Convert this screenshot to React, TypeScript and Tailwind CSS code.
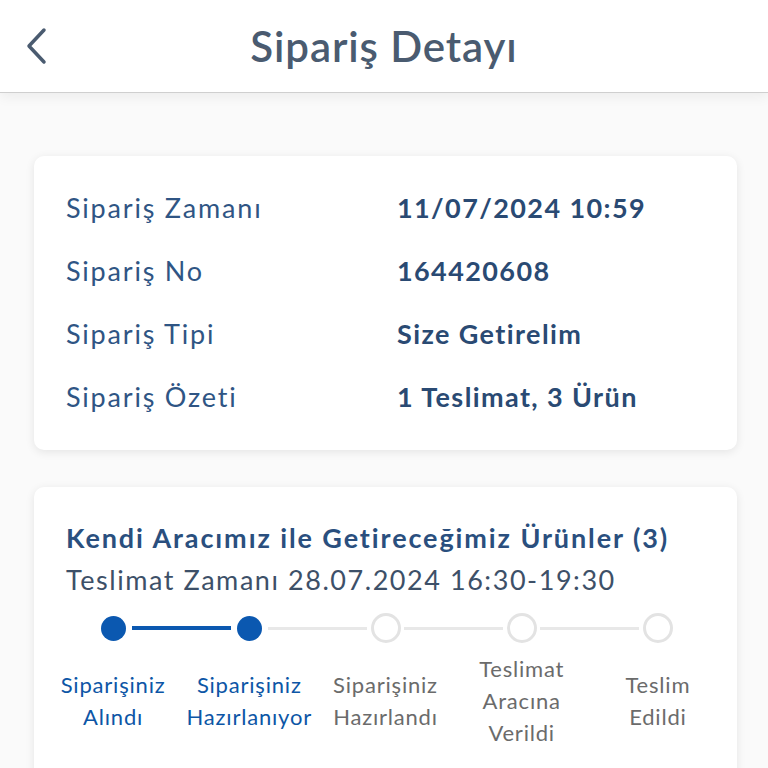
import React from "react";

const rows = [
    { label: "Sipariş Zamanı", value: "11/07/2024 10:59" },
    { label: "Sipariş No", value: "164420608" },
    { label: "Sipariş Tipi", value: "Size Getirelim" },
    { label: "Sipariş Özeti", value: "1 Teslimat, 3 Ürün" },
];

const steps = [
    { lines: ["Siparişiniz", "Alındı"], done: true },
    { lines: ["Siparişiniz", "Hazırlanıyor"], done: true },
    { lines: ["Siparişiniz", "Hazırlandı"], done: false },
    { lines: ["Teslimat", "Aracına", "Verildi"], done: false },
    { lines: ["Teslim", "Edildi"], done: false },
];

function Stepper() {
    return (
        <div className="grid grid-cols-5 px-[11px]">
            {steps.map((step, i) => {
                const prev = steps[i - 1];
                const leftBlue = prev && prev.done && step.done;
                const next = steps[i + 1];
                const rightBlue = next && next.done && step.done;
                return (
                    <div key={i} className="flex flex-col items-center">
                        <div className="flex w-full items-center h-[30px]">
                            <div
                                className={
                                    i === 0
                                        ? "flex-1"
                                        : leftBlue
                                        ? "flex-1 h-[4px] bg-[#0b58b0]"
                                        : "flex-1 h-[3px] bg-[#e8e8e8]"
                                }
                            />
                            <div className="w-[6px]" />
                            {step.done ? (
                                <div className="w-[25px] h-[25px] rounded-full bg-[#0b58b0]" />
                            ) : (
                                <div className="w-[30px] h-[30px] -mx-[2.5px] rounded-full border-[3px] border-[#e3e3e3] bg-white" />
                            )}
                            <div className="w-[6px]" />
                            <div
                                className={
                                    i === steps.length - 1
                                        ? "flex-1"
                                        : rightBlue
                                        ? "flex-1 h-[4px] bg-[#0b58b0]"
                                        : "flex-1 h-[3px] bg-[#e8e8e8]"
                                }
                            />
                        </div>
                        <div
                            className={
                                "mt-[10px] h-[96px] flex flex-col justify-center text-center text-[22px] leading-[32px] tracking-[0.8px] " +
                                (step.done ? "text-[#0d56a6]" : "text-[#6b6b6b]")
                            }
                        >
                            {step.lines.map((l) => (
                                <span key={l} className="whitespace-nowrap">
                                    {l}
                                </span>
                            ))}
                        </div>
                    </div>
                );
            })}
        </div>
    );
}

export default function App() {
    return (
        <div
            className="w-[768px] h-[768px] overflow-hidden bg-[#fafafa]"
            style={{ fontFamily: "Lato, 'Noto Sans', sans-serif" }}
        >
            {/* Header */}
            <div className="relative h-[93px] bg-white border-b border-[#cfcfcf] shadow-[0_4px_12px_rgba(0,0,0,0.06)] flex items-center justify-center">
                <svg
                    className="absolute left-[24px] top-[27px]"
                    width="24"
                    height="38"
                    viewBox="0 0 24 38"
                    fill="none"
                >
                    <path d="M20 3 L5 19 L20 35" stroke="#4a5b70" strokeWidth="3.5" strokeLinecap="round" strokeLinejoin="round" />
                </svg>
                <h1 className="text-[42px] font-semibold text-[#4a5b70] tracking-[0.9px]">Sipariş Detayı</h1>
            </div>

            <div className="pl-[34px] pr-[31px] pt-[63px] flex flex-col gap-[37px]">
                {/* Summary card */}
                <div className="bg-white rounded-[10px] shadow-[0_2px_10px_rgba(0,0,0,0.09)] px-[32px] py-[21px]">
                    {rows.map((r) => (
                        <div key={r.label} className="flex items-center h-[63px] text-[27px]">
                            <span className="w-[331px] text-[#2f5584] tracking-[1.8px]">{r.label}</span>
                            <span className="font-bold text-[#2a4a73] tracking-[1.4px]">{r.value}</span>
                        </div>
                    ))}
                </div>

                {/* Delivery card */}
                <div className="bg-white rounded-t-[10px] shadow-[0_2px_10px_rgba(0,0,0,0.09)] pt-[31px] h-[320px]">
                    <div className="px-[32px]">
                        <div className="text-[27px] leading-[40px] font-bold text-[#2a4f7e] tracking-[1.9px] whitespace-nowrap">
                            Kendi Aracımız ile Getireceğimiz Ürünler (3)
                        </div>
                        <div className="mt-[2px] text-[27px] leading-[40px] text-[#3d5068] tracking-[1.55px] whitespace-nowrap">
                            Teslimat Zamanı 28.07.2024 16:30-19:30
                        </div>
                    </div>
                    <div className="mt-[13px]">
                        <Stepper />
                    </div>
                </div>
            </div>
        </div>
    );
}
